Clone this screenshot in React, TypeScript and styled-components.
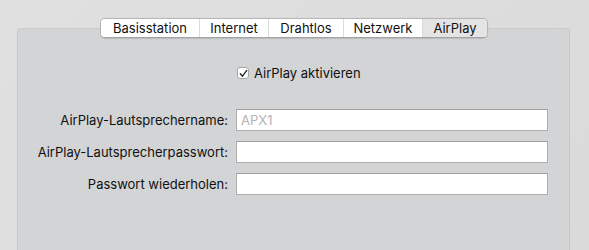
import React from "react";
import styled, { createGlobalStyle } from "styled-components";

const Global = createGlobalStyle`
  html, body { margin: 0; padding: 0; }
  body {
    background: #dcdcdd;
    font-family: Inter, "Liberation Sans", Arial, sans-serif;
    font-size: 13px;
    color: #1d1d1d;
  }
`;

const Window = styled.div`
  width: 589px;
  height: 250px;
  overflow: hidden;
  padding-top: 18px;
  box-sizing: border-box;
  background: linear-gradient(135deg, #e0e0e1 0%, #dadadb 100%);
`;

const TabBar = styled.div`
  position: relative;
  z-index: 1;
  display: flex;
  width: max-content;
  margin: 0 0 0 100px;
  height: 20px;
  box-sizing: border-box;
  background: #ffffff;
  border: 1px solid #b5b5b6;
  border-bottom-color: #a3a3a4;
  border-radius: 5px;
  box-shadow: 0 0.5px 1px rgba(0, 0, 0, 0.12);
  overflow: hidden;
`;

const Tab = styled.div<{ $w: number; $active?: boolean }>`
  width: ${(p) => p.$w}px;
  display: flex;
  align-items: center;
  justify-content: center;
  background: ${(p) => (p.$active ? "#e4e4e4" : "#ffffff")};
  border-left: 1px solid #dadada;
  box-sizing: border-box;
  line-height: 18px;
  color: #111;
  &:first-child { border-left: none; }
`;

const Panel = styled.div`
  margin: -10px 19px 0 17px;
  height: 240px;
  box-sizing: border-box;
  background: #d3d4d6;
  border: 1px solid #c8c9cb;
  border-bottom: none;
  border-radius: 4px 4px 0 0;
  padding-top: 37px;
`;

const Form = styled.div`
  display: grid;
  grid-template-columns: 210px 312px;
  column-gap: 8px;
  row-gap: 10px;
  align-items: center;
`;

const CheckRow = styled.label`
  grid-column: 2;
  display: flex;
  align-items: center;
  gap: 5px;
  height: 14px;
  margin-left: 1px;
  margin-bottom: 19px;
  color: #111;
`;

const Box = styled.span`
  width: 12px;
  height: 12px;
  box-sizing: border-box;
  background: #fff;
  border: 1px solid #a6a6a6;
  border-radius: 3px;
  display: flex;
  align-items: center;
  justify-content: center;
`;

const Label = styled.div`
  text-align: right;
  color: #111;
  white-space: nowrap;
`;

const Field = styled.div<{ $placeholder?: boolean }>`
  height: 22px;
  box-sizing: border-box;
  background: #fff;
  border: 1px solid #aeaeae;
  border-top-color: #9f9f9f;
  padding: 0 0 0 4px;
  line-height: 20px;
  color: ${(p) => (p.$placeholder ? "#b3b3b3" : "#111")};
`;

const tabs = [
  { name: "Basisstation", w: 98 },
  { name: "Internet", w: 69 },
  { name: "Drahtlos", w: 75 },
  { name: "Netzwerk", w: 79 },
  { name: "AirPlay", w: 65, active: true },
];

const fields = [
  { label: "AirPlay-Lautsprechername:", value: "APX1", placeholder: true },
  { label: "AirPlay-Lautsprecherpasswort:", value: "" },
  { label: "Passwort wiederholen:", value: "" },
];

export default function App() {
  return (
    <>
      <Global />
      <Window>
        <TabBar>
          {tabs.map((t) => (
            <Tab key={t.name} $w={t.w} $active={t.active}>
              {t.name}
            </Tab>
          ))}
        </TabBar>
        <Panel>
          <Form>
            <CheckRow>
              <Box>
                <svg width="9" height="9" viewBox="0 0 9 9">
                  <path d="M1.3 4.8 L3.5 7.2 L7.8 1.4" fill="none" stroke="#222" strokeWidth="1.3" strokeLinecap="round" strokeLinejoin="round" />
                </svg>
              </Box>
              AirPlay aktivieren
            </CheckRow>
            {fields.map((f) => (
              <React.Fragment key={f.label}>
                <Label>{f.label}</Label>
                <Field $placeholder={f.placeholder}>{f.value}</Field>
              </React.Fragment>
            ))}
          </Form>
        </Panel>
      </Window>
    </>
  );
}
